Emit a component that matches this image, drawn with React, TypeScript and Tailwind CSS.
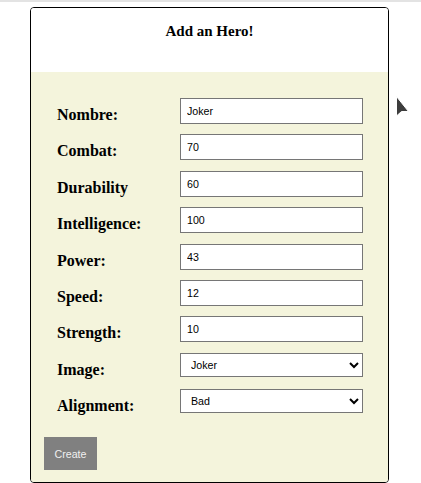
import React from "react";

type Field = {
    label: string;
    value: string;
    kind?: "input" | "select";
};

const fields: Field[] = [
    { label: "Nombre:", value: "Joker" },
    { label: "Combat:", value: "70" },
    { label: "Durability", value: "60" },
    { label: "Intelligence:", value: "100" },
    { label: "Power:", value: "43" },
    { label: "Speed:", value: "12" },
    { label: "Strength:", value: "10" },
    { label: "Image:", value: "Joker", kind: "select" },
    { label: "Alignment:", value: "Bad", kind: "select" },
];

const serif = "font-['Liberation_Serif','Times_New_Roman',serif]";
const sans = "font-['Liberation_Sans',Arial,sans-serif]";

const Cursor: React.FC = () => (
    <svg
        className="absolute left-[394px] top-[95px]"
        width="18"
        height="26"
        viewBox="0 0 18 26"
    >
        <path
            d="M2.5 1.5 L2.5 21 L7.5 16.5 L14.5 16.5 Z"
            fill="#3d3d3d"
            stroke="#ffffff"
            strokeWidth="1"
            strokeLinejoin="round"
        />
    </svg>
);

const App: React.FC = () => {
    return (
        <div className="relative w-[421px] h-[483px] overflow-hidden bg-white">
            <div className="h-[2px] bg-[#e3e3e3]" />
            <div className="ml-[30px] mt-[5px] w-[359px] h-[476px] flex flex-col border border-black rounded-[4px] overflow-hidden">
                <div className="h-[64px] bg-white pt-[13px]">
                    <h3 className={`${serif} text-[15px] leading-[20px] font-bold text-center text-black`}>
                        Add an Hero!
                    </h3>
                </div>
                <form
                    className="flex-1 bg-[#f4f4dc] pt-[26px] pl-[26px] pr-[24px]"
                    onSubmit={(e) => e.preventDefault()}
                >
                    <div className="flex flex-col gap-[10.4px]">
                        {fields.map((f) => (
                            <div key={f.label} className="flex h-[26px] items-start">
                                <label
                                    className={`${serif} w-[123px] shrink-0 pt-[7px] text-[16px] leading-[20px] font-bold text-black`}
                                >
                                    {f.label}
                                </label>
                                {f.kind === "select" ? (
                                    <select
                                        defaultValue={f.value}
                                        className={`${sans} w-[183px] h-[24px] border border-[#767676] bg-white pl-[6px] text-[10.67px] text-black`}
                                    >
                                        <option>{f.value}</option>
                                    </select>
                                ) : (
                                    <input
                                        type="text"
                                        defaultValue={f.value}
                                        className={`${sans} w-[183px] h-[26px] border border-[#767676] bg-white px-[6px] text-[10.67px] text-black`}
                                    />
                                )}
                            </div>
                        ))}
                    </div>
                    <button
                        type="submit"
                        className={`${sans} -ml-[13px] mt-[22px] w-[53px] h-[33px] bg-[#808080] text-[10.67px] text-[#f0f0f0]`}
                    >
                        Create
                    </button>
                </form>
            </div>
            <Cursor />
        </div>
    );
};

export default App;
